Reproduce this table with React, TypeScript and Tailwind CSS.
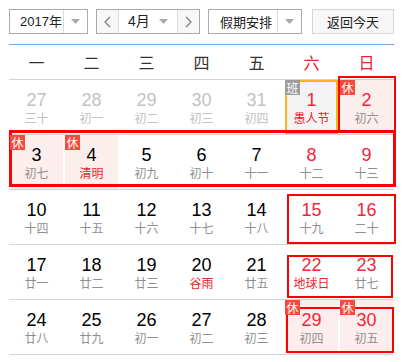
import React from "react";

type Day = {
  d: number;
  l: string;
  dim?: boolean; // outside current month
  red?: boolean; // weekend number
  lred?: boolean; // festival / solar term text
  bg?: "pink" | "gray";
  badge?: "休" | "班";
  sel?: boolean;
};

const weeks: Day[][] = [
  [
    { d: 27, l: "三十", dim: true },
    { d: 28, l: "初一", dim: true },
    { d: 29, l: "初二", dim: true },
    { d: 30, l: "初三", dim: true },
    { d: 31, l: "初四", dim: true },
    { d: 1, l: "愚人节", red: true, lred: true, bg: "gray", badge: "班", sel: true },
    { d: 2, l: "初六", red: true, bg: "pink", badge: "休" },
  ],
  [
    { d: 3, l: "初七", bg: "pink", badge: "休" },
    { d: 4, l: "清明", lred: true, bg: "pink", badge: "休" },
    { d: 5, l: "初九" },
    { d: 6, l: "初十" },
    { d: 7, l: "十一" },
    { d: 8, l: "十二", red: true },
    { d: 9, l: "十三", red: true },
  ],
  [
    { d: 10, l: "十四" },
    { d: 11, l: "十五" },
    { d: 12, l: "十六" },
    { d: 13, l: "十七" },
    { d: 14, l: "十八" },
    { d: 15, l: "十九", red: true },
    { d: 16, l: "二十", red: true },
  ],
  [
    { d: 17, l: "廿一" },
    { d: 18, l: "廿二" },
    { d: 19, l: "廿三" },
    { d: 20, l: "谷雨", lred: true },
    { d: 21, l: "廿五" },
    { d: 22, l: "地球日", red: true, lred: true },
    { d: 23, l: "廿七", red: true },
  ],
  [
    { d: 24, l: "廿八" },
    { d: 25, l: "廿九" },
    { d: 26, l: "初一" },
    { d: 27, l: "初二" },
    { d: 28, l: "初三" },
    { d: 29, l: "初四", red: true, bg: "pink", badge: "休" },
    { d: 30, l: "初五", red: true, bg: "pink", badge: "休" },
  ],
];

const weekdays = ["一", "二", "三", "四", "五", "六", "日"];

const Caret = () => (
  <svg width="9" height="5" viewBox="0 0 9 5">
    <path d="M0 0h9L4.5 5z" fill="#a8a8a8" />
  </svg>
);

const Chevron = ({ right }: { right?: boolean }) => (
  <svg width="7" height="12" viewBox="0 0 7 12">
    <polyline
      points={right ? "1,1 6,6 1,11" : "6,1 1,6 6,11"}
      fill="none"
      stroke="#777"
      strokeWidth="1.2"
    />
  </svg>
);

function Cell({ day }: { day: Day }) {
  const numColor = day.dim ? "text-[#c2c2c2]" : day.red ? "text-[#f0273a]" : "text-black";
  const lunarColor = day.dim
    ? "text-[#c2c2c2]"
    : day.lred
    ? "text-[#e8232d]"
    : "text-[#8f8f8f]";
  const bg =
    day.bg === "pink" ? "bg-[#fdeeee]" : day.bg === "gray" ? "bg-[#f3f3f3]" : "";
  return (
    <div className="h-[54px] px-px">
      <div
        className={`relative flex h-full flex-col items-center ${bg} ${
          day.sel ? "border-2 border-[#fcb614] pt-[8px]" : "pt-[10px]"
        }`}
      >
        {day.badge && (
          <span
            className={`absolute ${day.sel ? "-left-[2px] -top-[2px]" : "left-0 top-0"} z-20 flex h-[15px] w-[15px] items-center justify-center text-[12px] leading-none text-white ${
              day.badge === "班" ? "bg-[#9c9c9c]" : "bg-[#f64a3c]"
            }`}
          >
            {day.badge}
          </span>
        )}
        <span className={`font-['Liberation_Sans',Arial,sans-serif] text-[18px] leading-5 ${numColor}`}>
          {day.d}
        </span>
        <span className={`text-[12px] leading-4 ${lunarColor}`}>{day.l}</span>
      </div>
    </div>
  );
}

export default function App() {
  return (
    <div className="relative h-[362px] w-[402px] overflow-hidden bg-white pl-[9px] pt-[9px] font-['Noto_Sans_CJK_SC','Noto_Sans',sans-serif] text-[#333]">
      {/* toolbar */}
      <div className="flex h-[25px] text-[13px]">
        <div className="flex w-[79px] border border-[#a9a9a9]">
          <div className="flex flex-1 items-center whitespace-nowrap pl-[10px] font-['Liberation_Sans','Noto_Sans_CJK_SC',sans-serif] text-[13px] text-[#222]">
            2017年
          </div>
          <div className="flex w-[24px] shrink-0 items-center justify-center border-l border-[#dcdcdc]">
            <Caret />
          </div>
        </div>

        <div className="ml-[8px] flex w-[104px] border border-[#a9a9a9]">
          <div className="flex w-[21px] items-center justify-center bg-[#f7f7f7]">
            <Chevron />
          </div>
          <div className="flex flex-1 items-center justify-between border-x border-[#dcdcdc] pl-[9px] pr-[9px]">
            <span className="font-['Liberation_Sans','Noto_Sans_CJK_SC',sans-serif] text-[14px] text-[#222]">
              4月
            </span>
            <Caret />
          </div>
          <div className="flex w-[21px] items-center justify-center bg-[#f7f7f7]">
            <Chevron right />
          </div>
        </div>

        <div className="ml-[8px] flex w-[94px] border border-[#a9a9a9]">
          <div className="flex flex-1 items-center whitespace-nowrap pl-[11px] text-[13px] text-[#222]">假期安排</div>
          <div className="flex w-[24px] shrink-0 items-center justify-center border-l border-[#dcdcdc]">
            <Caret />
          </div>
        </div>

        <button className="ml-[10px] flex w-[82px] items-center justify-center whitespace-nowrap border border-[#d6d6d6] bg-[#f7f7f7] text-[13px] text-[#222]">
          返回今天
        </button>
      </div>

      {/* calendar table */}
      <div className="mt-[10px] w-[385px] border-t border-[#6ea6ea]">
        <div className="grid h-[35px] grid-cols-7 border-b border-[#d4d4d4]">
          {weekdays.map((w, i) => (
            <div
              key={w}
              className={`flex items-center justify-center text-[16px] ${
                i >= 5 ? "text-[#e8232d]" : "text-[#333]"
              }`}
            >
              {w}
            </div>
          ))}
        </div>
        {weeks.map((row, r) => (
          <div key={r} className="grid grid-cols-7 border-b border-[#d4d4d4]">
            {row.map((day, i) => (
              <Cell key={i} day={day} />
            ))}
          </div>
        ))}
      </div>

      {/* red annotation boxes */}
      <div className="pointer-events-none absolute left-[338px] top-[76px] z-10 h-[56px] w-[58px] border-2 border-[#ff0000]" />
      <div className="pointer-events-none absolute left-[9px] top-[130px] z-10 h-[57px] w-[387px] border-[3px] border-[#ff0000]" />
      <div className="pointer-events-none absolute left-[287px] top-[194px] z-10 h-[50px] w-[109px] border-2 border-[#ff0000]" />
      <div className="pointer-events-none absolute left-[287px] top-[255px] z-10 h-[43px] w-[106px] border-2 border-[#ff0000]" />
      <div className="pointer-events-none absolute left-[286px] top-[307px] z-10 h-[46px] w-[108px] border-2 border-[#ff0000]" />
    </div>
  );
}
